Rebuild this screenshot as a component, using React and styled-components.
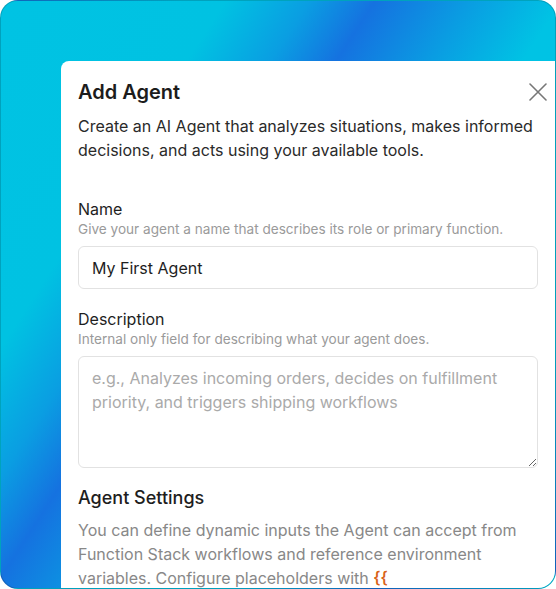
import React from "react";
import styled, { createGlobalStyle } from "styled-components";

const GlobalStyle = createGlobalStyle`
  html, body {
    margin: 0;
    padding: 0;
    background: #ffffff;
  }
  * {
    box-sizing: border-box;
  }
`;

const Frame = styled.div`
  width: 556px;
  height: 589px;
  border-radius: 18px;
  border: 1px solid rgba(0, 0, 0, 0.17);
  overflow: hidden;
  padding: 60px 0 0 60px;
  background: linear-gradient(
    123deg,
    #00c3e3 0%,
    #00c2e2 24%,
    #0a9ee2 33%,
    #1572e0 40%,
    #0a9ce2 50%,
    #00c3e4 60%,
    #00c4e4 100%
  );
  font-family: Inter, "Noto Sans", sans-serif;
`;

const Modal = styled.div`
  background: #ffffff;
  border-top-left-radius: 8px;
  min-height: 100%;
  padding: 17px 17px 24px 17px;
  color: #1e1e1e;
`;

const Header = styled.div`
  display: flex;
  align-items: center;
  justify-content: space-between;
`;

const Title = styled.h2`
  margin: 0;
  font-size: 20px;
  line-height: 28px;
  font-weight: 600;
  color: #1c1c1c;
`;

const CloseButton = styled.button`
  display: flex;
  align-items: center;
  justify-content: center;
  width: 24px;
  height: 24px;
  padding: 0;
  margin-right: -12px;
  border: none;
  background: transparent;
  color: #777777;
  cursor: pointer;
`;

const Intro = styled.p`
  margin: 8px 0 0;
  font-size: 16px;
  line-height: 24px;
  color: #2a2a2a;
`;

const Field = styled.div`
  display: flex;
  flex-direction: column;
  margin-top: ${(p) => p.$top}px;
`;

const Label = styled.label`
  font-size: 16px;
  line-height: 20px;
  font-weight: 400;
  color: #1e1e1e;
`;

const Hint = styled.span`
  margin-top: 1px;
  font-size: 13.6px;
  line-height: 18px;
  color: #9a9a9a;
`;

const TextInput = styled.input`
  margin-top: 8px;
  width: 100%;
  height: 43px;
  padding: 0 13px;
  border: 1px solid #e2e2e2;
  border-radius: 6px;
  font-family: inherit;
  font-size: 16px;
  color: #1e1e1e;
  outline: none;
`;

const TextArea = styled.textarea`
  margin-top: 8px;
  width: 100%;
  height: 112px;
  padding: 9px 13px;
  border: 1px solid #e2e2e2;
  border-radius: 6px;
  font-family: inherit;
  font-size: 16px;
  line-height: 24px;
  color: #1e1e1e;
  outline: none;
  resize: vertical;

  &::placeholder {
    color: #aaaaaa;
  }
`;

const SectionTitle = styled.h3`
  margin: 17px 0 0;
  font-size: 18px;
  line-height: 26px;
  font-weight: 500;
  color: #1e1e1e;
`;

const SectionText = styled.p`
  margin: 7px 0 0;
  font-size: 16px;
  line-height: 24px;
  color: #888888;
`;

const Token = styled.code`
  font-family: inherit;
  color: #d9631a;
  font-weight: 600;
`;

function CloseIcon() {
  return (
    <svg width="18" height="18" viewBox="0 0 18 18" fill="none">
      <path
        d="M1 1 L17 17 M17 1 L1 17"
        stroke="currentColor"
        strokeWidth="1.6"
        strokeLinecap="round"
      />
    </svg>
  );
}

export default function App() {
  return (
    <>
      <GlobalStyle />
      <Frame>
        <Modal>
          <Header>
            <Title>Add Agent</Title>
            <CloseButton aria-label="Close">
              <CloseIcon />
            </CloseButton>
          </Header>
          <Intro>
            Create an AI Agent that analyzes situations, makes informed
            decisions, and acts using your available tools.
          </Intro>

          <Field $top={37}>
            <Label>Name</Label>
            <Hint>Give your agent a name that describes its role or primary function.</Hint>
            <TextInput defaultValue="My First Agent" />
          </Field>

          <Field $top={20}>
            <Label>Description</Label>
            <Hint>Internal only field for describing what your agent does.</Hint>
            <TextArea placeholder="e.g., Analyzes incoming orders, decides on fulfillment priority, and triggers shipping workflows" />
          </Field>

          <SectionTitle>Agent Settings</SectionTitle>
          <SectionText>
            You can define dynamic inputs the Agent can accept from Function
            Stack workflows and reference environment variables. Configure
            placeholders with <Token>{"{{ $input.variable_name_here }}"}</Token>.
          </SectionText>
        </Modal>
      </Frame>
    </>
  );
}
